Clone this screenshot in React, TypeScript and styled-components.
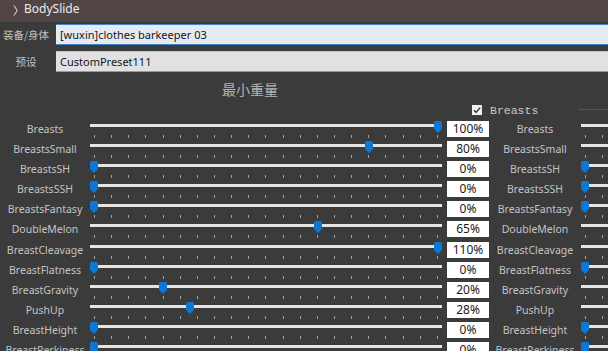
import styled, { createGlobalStyle } from 'styled-components';

const GlobalStyle = createGlobalStyle`
  html, body {
    margin: 0;
    padding: 0;
    background: #3b3b3b;
    overflow: hidden;
  }
  * {
    box-sizing: border-box;
  }
`;

type Morph = {
  name: string;
  value: number;
};

const morphs: Morph[] = [
  { name: 'Breasts', value: 100 },
  { name: 'BreastsSmall', value: 80 },
  { name: 'BreastsSH', value: 0 },
  { name: 'BreastsSSH', value: 0 },
  { name: 'BreastsFantasy', value: 0 },
  { name: 'DoubleMelon', value: 65 },
  { name: 'BreastCleavage', value: 110 },
  { name: 'BreastFlatness', value: 0 },
  { name: 'BreastGravity', value: 20 },
  { name: 'PushUp', value: 28 },
  { name: 'BreastHeight', value: 0 },
  { name: 'BreastPerkiness', value: 0 },
];

const TICKS = 21;

function Thumb() {
  return (
    <svg width="8" height="12" viewBox="0 0 8 12">
      <path d="M1.5 0 H6.5 Q8 0 8 1.5 V8 L4 12 L0 8 V1.5 Q0 0 1.5 0 Z" fill="#0b78d6" />
    </svg>
  );
}

function Slider({ value, width }: { value: number; width: number }) {
  // thumb centre runs from 4px to width - 4px
  const pct = Math.min(Math.max(value, 0), 100) / 100;
  const left = pct * (width - 8);
  return (
    <SliderBox $width={width}>
      <Track />
      <Ticks>
        {Array.from({ length: TICKS }).map((_, i) => (
          <Tick key={i} />
        ))}
      </Ticks>
      <ThumbWrap style={{ left }}>
        <Thumb />
      </ThumbWrap>
    </SliderBox>
  );
}

function App() {
  return (
    <Window>
      <GlobalStyle />
      <TitleBar>
        <Chevron>
          <svg width="5" height="11" viewBox="0 0 5 11">
            <path d="M1 0.5 L4.2 5.5 L1 10.5" stroke="#e6e6e6" strokeWidth="1" fill="none" />
          </svg>
        </Chevron>
        <TitleText>BodySlide</TitleText>
      </TitleBar>

      <FormRow $top={2}>
        <FormLabel>装备/身体</FormLabel>
        <TextInput $active>[wuxin]clothes barkeeper 03</TextInput>
      </FormRow>
      <FormRow $top={7}>
        <FormLabel>预设</FormLabel>
        <TextInput>CustomPreset111</TextInput>
      </FormRow>

      <Header>
        <SectionTitle>最小重量</SectionTitle>
        <GroupRow>
          <CheckBox>
            <svg width="10" height="10" viewBox="0 0 10 10">
              <path d="M2 5.2 L4.2 7.4 L8.2 2.6" stroke="#222" strokeWidth="1.3" fill="none" />
            </svg>
          </CheckBox>
          <GroupText>Breasts</GroupText>
          <GroupLine />
        </GroupRow>
      </Header>

      <SliderList>
        {morphs.map((m) => (
          <SliderRow key={m.name}>
            <RowLabel>{m.name}</RowLabel>
            <Slider value={m.value} width={352} />
            <ValueBox>{m.value}%</ValueBox>
            <RowLabel>{m.name}</RowLabel>
            <Slider value={m.value} width={352} />
          </SliderRow>
        ))}
      </SliderList>
    </Window>
  );
}

export default App;

const Window = styled.div`
  width: 608px;
  height: 351px;
  overflow: hidden;
  background: #3b3b3b;
  font-family: 'Noto Sans', 'Noto Sans CJK SC', sans-serif;
  color: #c4c4c4;
`;

const TitleBar = styled.div`
  height: 22px;
  background: #514444;
  display: flex;
  align-items: flex-start;
  padding: 2px 0 0 12px;
`;

const Chevron = styled.div`
  display: flex;
  width: 12px;
  padding: 3px 0 0 1px;
`;

const TitleText = styled.div`
  font-size: 12px;
  line-height: 14px;
  color: #ececec;
`;

const FormRow = styled.div<{ $top: number }>`
  display: flex;
  align-items: center;
  margin-top: ${(p) => p.$top}px;
  height: 20px;
`;

const FormLabel = styled.div`
  width: 56px;
  padding-right: 4px;
  text-align: center;
  font-family: 'Noto Sans CJK SC', sans-serif;
  font-size: 10.5px;
  color: #c2c2c2;
`;

const TextInput = styled.div<{ $active?: boolean }>`
  flex: 1;
  height: 21px;
  display: flex;
  align-items: center;
  padding-left: 4px;
  font-size: 11px;
  color: #151515;
  background: ${(p) => (p.$active ? '#e4ebf3' : '#e1e1e1')};
  border-top: 1px solid ${(p) => (p.$active ? '#3f87cc' : '#c8c8c8')};
  border-bottom: 1px solid ${(p) => (p.$active ? '#3f87cc' : '#9a9a9a')};
`;

const Header = styled.div`
  height: 48px;
`;

const SectionTitle = styled.div`
  width: 500px;
  text-align: center;
  padding-top: 9px;
  font-family: 'Noto Sans CJK SC', sans-serif;
  font-size: 14px;
  line-height: 18px;
  color: #b4b4b4;
`;

const GroupRow = styled.div`
  display: flex;
  align-items: center;
  margin-top: 5px;
  padding-left: 472px;
  height: 14px;
`;

const CheckBox = styled.div`
  width: 10px;
  height: 10px;
  background: #f0f0f0;
  display: flex;
`;

const GroupText = styled.div`
  margin-left: 8px;
  font-family: 'Liberation Mono', monospace;
  font-size: 11.5px;
  color: #c8c8c8;
`;

const GroupLine = styled.div`
  flex: 1;
  margin: 0 0 2px 40px;
  height: 1px;
  background: #555555;
`;

const SliderList = styled.div`
  display: flex;
  flex-direction: column;
`;

const SliderRow = styled.div`
  display: grid;
  grid-template-columns: 90px 352px 5px 42px 92px 352px;
  height: 20.1px;
  align-items: start;

  & > :nth-child(3) {
    grid-column: 4;
  }
  & > :nth-child(4) {
    grid-column: 5;
  }
  & > :nth-child(5) {
    grid-column: 6;
  }
`;

const RowLabel = styled.div`
  height: 20px;
  line-height: 20px;
  text-align: center;
  font-size: 10.5px;
  color: #c4c4c4;
  white-space: nowrap;
`;

const SliderBox = styled.div<{ $width: number }>`
  position: relative;
  width: ${(p) => p.$width}px;
  height: 20px;
`;

const Track = styled.div`
  margin-top: 5px;
  height: 3px;
  background: #e4e4e4;
`;

const Ticks = styled.div`
  display: flex;
  justify-content: space-between;
  padding: 0 4px 0 4px;
  margin-top: 8px;
`;

const Tick = styled.div`
  width: 1px;
  height: 3px;
  background: #a0a0a0;
`;

const ThumbWrap = styled.div`
  position: absolute;
  top: 2px;
  width: 8px;
  height: 12px;
  display: flex;
`;

const ValueBox = styled.div`
  margin-top: 2px;
  height: 16px;
  background: #ffffff;
  color: #1c1c1c;
  font-size: 12px;
  line-height: 16px;
  text-align: center;
`;
